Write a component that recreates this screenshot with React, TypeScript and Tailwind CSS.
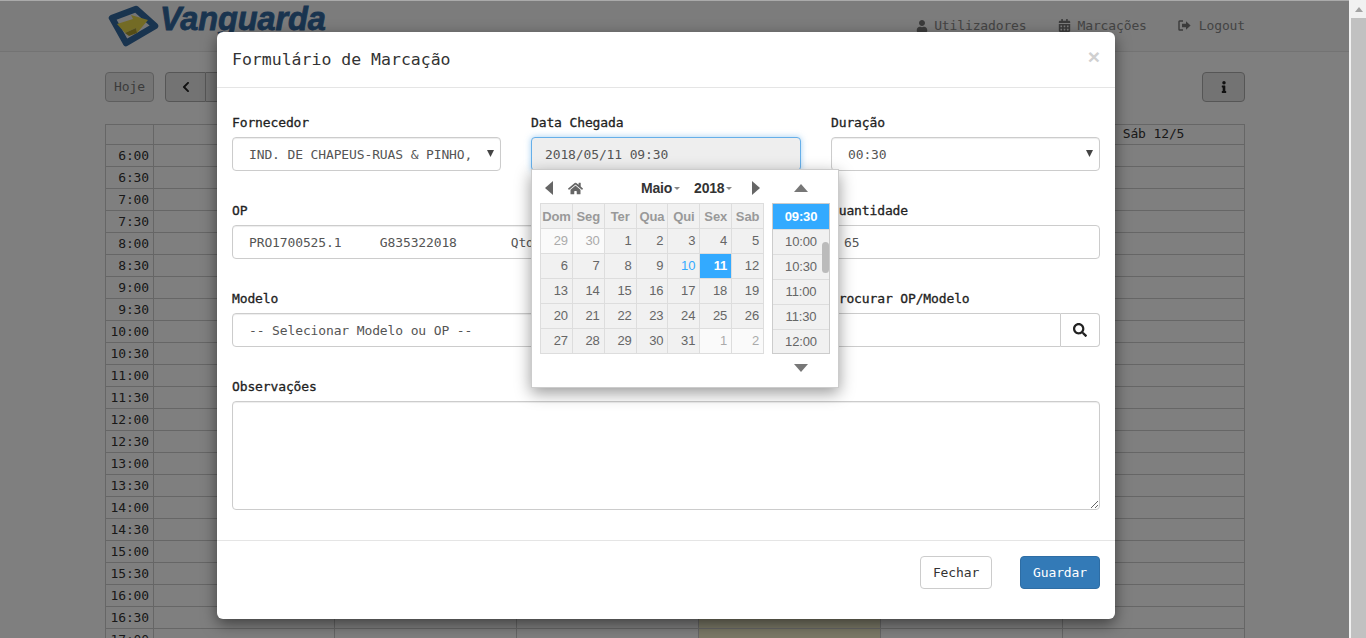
import React from "react";
import { FaUser, FaCalendarAlt, FaSearch, FaHome, FaInfo, FaChevronLeft } from "react-icons/fa";

const mono = "font-['DejaVu_Sans_Mono','Liberation_Mono',monospace] text-[13px] tracking-[-0.13px]";
const times = ["6:00","6:30","7:00","7:30","8:00","8:30","9:00","9:30","10:00","10:30","11:00","11:30","12:00","12:30","13:00","13:30","14:00","14:30","15:00","15:30","16:00","16:30","17:00"];
const heads = ["Seg 7/5","Ter 8/5","Qua 9/5","Qui 10/5","Sex 11/5","Sáb 12/5"];
const dayCols = [0,1,2,3,4,5];

function Caret() {
  return (
    <svg width="7" height="7" viewBox="0 0 7 7" className="shrink-0 -mt-[2px]">
      <path d="M0 0h7L3.5 7z" fill="#444" />
    </svg>
  );
}

function Logo() {
  return (
    <svg width="52" height="44" viewBox="0 0 52 44" className="shrink-0">
      <path d="M4 14 L28 5 L47 22 L18 39 Z" fill="#ececec" stroke="#33689f" strokeWidth="6.5" strokeLinejoin="round" />
      <path d="M9 20 L25 15 L23 11 L40 16 L29 29 L28 24 L17 29Z" fill="#e6d64a" />
      <path d="M17 29 L28 24 L29 29 L21 32Z" fill="#a89a2c" />
    </svg>
  );
}

function LogoutIcon() {
  return (
    <svg width="13" height="11" viewBox="0 0 13 11" className="shrink-0">
      <path d="M5 1H1.6Q1 1 1 1.6v7.8q0 .6.6.6H5" fill="none" stroke="#777" strokeWidth="1.4" />
      <path d="M4 3.8h4V1.2l4.6 4.3L8 9.8V7.2H4z" fill="#777" />
    </svg>
  );
}

function Label({ children }: { children: React.ReactNode }) {
  return <div className={`${mono} h-5 leading-[22px] mb-[5px] text-[#222] [-webkit-text-stroke:0.3px_#222]`}>{children}</div>;
}

function Select({ text, arrow = true }: { text: React.ReactNode; arrow?: boolean }) {
  return (
    <div className={`${mono} h-[34px] border border-[#ccc] rounded bg-white flex items-center pl-4 pr-[6px] text-[#555] shadow-[inset_0_1px_1px_rgba(0,0,0,0.075)]`}>
      <span className="flex-1 overflow-hidden whitespace-pre pt-[2px]">{text}</span>
      {arrow && <Caret />}
    </div>
  );
}

function Background() {
  return (
    <div className={`${mono} absolute inset-0 bg-white text-[#333] overflow-hidden`}>
      <div className="h-[52px] bg-[#f8f8f8] border-b border-[#e7e7e7] flex items-center pl-[108px] pr-[104px]">
        <Logo />
        <span className="font-['Liberation_Sans',sans-serif] font-bold italic text-[32.5px] text-[#33689f] [-webkit-text-stroke:0.8px_#33689f] -mt-[13px] leading-none">Vanguarda</span>
        <div className="ml-auto flex items-center text-[#888]">
          <FaUser className="w-3 h-3 text-[#777] mr-[6px]" />
          <span>Utilizadores</span>
          <FaCalendarAlt className="w-[13px] h-[13px] text-[#777] ml-[31px] mr-[7px]" />
          <span>Marcações</span>
          <span className="ml-[31px] mr-[8px]"><LogoutIcon /></span>
          <span>Logout</span>
        </div>
      </div>
      <div className="w-[1140px] ml-[105px]">
        <div className="mt-5 h-[30px] flex items-center">
          <div className="w-[49px] h-[30px] border border-[#adadad] rounded bg-[#e6e6e6] opacity-80 flex items-center justify-center text-[#555]">Hoje</div>
          <div className="ml-[11px] w-[41px] h-[30px] border border-[#adadad] rounded-l bg-[#e6e6e6] flex items-center justify-center">
            <FaChevronLeft className="w-3 h-3 text-[#222]" />
          </div>
          <div className="w-[40px] h-[30px] border border-l-0 border-[#adadad] bg-[#e6e6e6]" />
          <div className="ml-auto w-[43px] h-[30px] border border-[#adadad] rounded bg-[#e6e6e6] flex items-center justify-center">
            <FaInfo className="w-3 h-3 text-[#222]" />
          </div>
        </div>
        <div className="mt-[22px] border-t border-l border-[#ccc]">
          <div className="flex h-5 border-b border-[#ccc]">
            <div className="w-[48px] border-r border-[#ccc]" />
            {dayCols.map((i) => (
              <div key={i} className={`${i === 0 ? "w-[181px]" : "w-[182px]"} border-r border-[#ccc] text-center leading-[18px]`}>{heads[i]}</div>
            ))}
          </div>
          {times.map((t) => (
            <div key={t} className="flex h-[22px] border-b border-[#ccc]">
              <div className="w-[48px] border-r border-[#ccc] text-right pr-[4px] leading-[22px]">{t}</div>
              {dayCols.map((i) => (
                <div key={i} className={`${i === 0 ? "w-[181px]" : "w-[182px]"} border-r border-[#ccc] ${i === 3 ? "bg-[#f6f2cf]" : ""}`} />
              ))}
            </div>
          ))}
        </div>
      </div>
    </div>
  );
}

const weeks = [
  [29,30,1,2,3,4,5],
  [6,7,8,9,10,11,12],
  [13,14,15,16,17,18,19],
  [20,21,22,23,24,25,26],
  [27,28,29,30,31,1,2],
];

function Picker() {
  const cell = "w-8 h-[25px] border-r border-b border-[#ddd] text-right pr-[4px] leading-[23px]";
  return (
    <div className="absolute z-10 left-0 top-[57px] w-[308px] h-[219px] bg-white border border-[#ccc] shadow-[0_5px_15px_rgba(0,0,0,0.4)] pl-[8px] pt-[10px] font-['Liberation_Sans',sans-serif] text-[13px] text-[#666]">
      <div className="flex items-center h-4 relative">
        <svg width="8" height="14" viewBox="0 0 8 14" className="ml-[5px]"><path d="M8 0v14L0 7z" fill="#666" /></svg>
        <FaHome className="w-[15px] h-[15px] text-[#666] ml-[15px]" />
        <span className="ml-[58px] font-bold text-[14px] tracking-[-0.2px] text-[#333]">Maio</span>
        <svg width="6" height="3" viewBox="0 0 6 3" className="ml-[2px]"><path d="M0 0h6L3 3z" fill="#888" /></svg>
        <span className="ml-[14px] font-bold text-[14px] tracking-[-0.2px] text-[#333]">2018</span>
        <svg width="6" height="3" viewBox="0 0 6 3" className="ml-[2px]"><path d="M0 0h6L3 3z" fill="#888" /></svg>
        <svg width="8" height="14" viewBox="0 0 8 14" className="ml-[20px]"><path d="M0 0v14L8 7z" fill="#666" /></svg>
        <svg width="14" height="8" viewBox="0 0 14 8" className="ml-[34px]"><path d="M7 0l7 8H0z" fill="#777" /></svg>
      </div>
      <div className="flex mt-[7px]">
        <div className="w-[224px] border-l border-t border-[#ddd] bg-[#f1f1f1] h-[151px]">
          <div className="flex">
            {["Dom","Seg","Ter","Qua","Qui","Sex","Sab"].map((d) => (
              <div key={d} className="w-8 h-[25px] border-r border-b border-[#ddd] text-center font-bold text-[#999] leading-[25px] text-[13px]">{d}</div>
            ))}
          </div>
          {weeks.map((w, r) => (
            <div key={r} className="flex">
              {w.map((d, c) => {
                const other = (r === 0 && c < 2) || (r === 4 && c > 4);
                const sel = r === 1 && c === 5;
                const today = r === 1 && c === 4;
                return (
                  <div key={c} className={`${cell} ${other ? "bg-[#fafafa] text-[#aaa]" : ""} ${sel ? "bg-[#33aaff] text-white font-bold" : ""} ${today ? "text-[#33aaff]" : ""}`}>{d}</div>
                );
              })}
            </div>
          ))}
        </div>
        <div className="relative ml-[8px] w-[58px] h-[151px] border border-[#ccc] bg-[#f1f1f1] overflow-hidden text-center">
          <div className="h-[25px] bg-[#33aaff] text-white font-bold leading-[25px]">09:30</div>
          {["10:00","10:30","11:00","11:30","12:00"].map((t) => (
            <div key={t} className="h-[25px] border-t border-[#ddd] leading-[23px]">{t}</div>
          ))}
          <div className="absolute right-0 top-[38px] w-[7px] h-[31px] rounded-full bg-[#bbb]" />
        </div>
      </div>
      <svg width="14" height="8" viewBox="0 0 14 8" className="ml-[254px] mt-[10px]"><path d="M0 0h14L7 8z" fill="#777" /></svg>
    </div>
  );
}

function Modal() {
  return (
    <div className={`${mono} w-[898px] h-[587px] mt-[31px] ml-[217px] bg-white rounded-md shadow-[0_5px_15px_rgba(0,0,0,0.5)] flex flex-col shrink-0`}>
      <div className="h-[56px] border-b border-[#e5e5e5] flex items-center pl-[15px] pr-[15px] shrink-0">
        <span className="text-[16.5px] tracking-normal text-[#333] pt-px">Formulário de Marcação</span>
        <span className="ml-auto -mt-[6px] font-['Liberation_Sans',sans-serif] font-bold text-[21px] text-[#d0d0d0] leading-none">×</span>
      </div>
      <div className="px-[15px] pt-[24px] h-[453px] shrink-0 border-b border-[#e5e5e5]">
        <div className="grid grid-cols-[269px_270px_269px] gap-x-[30px] gap-y-[29px]">
          <div>
            <Label>Fornecedor</Label>
            <Select text="IND. DE CHAPEUS-RUAS & PINHO," />
          </div>
          <div className="relative">
            <Label>Data Chegada</Label>
            <div className="h-[34px] border border-[#66afe9] rounded bg-[#eee] flex items-center pl-[13px] pt-[2px] text-[#555] shadow-[0_0_6px_rgba(102,175,233,0.6)]">2018/05/11 09:30</div>
            <Picker />
          </div>
          <div>
            <Label>Duração</Label>
            <Select text="00:30" />
          </div>
          <div className="col-span-2">
            <Label>OP</Label>
            <Select arrow={false} text="PRO1700525.1     G835322018       Qtd: 65" />
          </div>
          <div>
            <Label>Quantidade</Label>
            <div className="h-[34px] border border-[#ccc] rounded flex items-center pl-[12px] pt-[2px] text-[#555]">65</div>
          </div>
          <div className="col-span-2">
            <Label>Modelo</Label>
            <Select arrow={false} text="-- Selecionar Modelo ou OP --" />
          </div>
          <div>
            <Label>Procurar OP/Modelo</Label>
            <div className="flex h-[34px]">
              <div className="flex-1 border border-[#ccc] rounded-l" />
              <div className="w-[39px] border border-l-0 border-[#ccc] rounded-r flex items-center justify-center">
                <FaSearch className="w-[14px] h-[14px] text-[#222]" />
              </div>
            </div>
          </div>
          <div className="col-span-3">
            <Label>Observações</Label>
            <textarea readOnly className="block w-full h-[109px] border border-[#ccc] rounded shadow-[inset_0_1px_1px_rgba(0,0,0,0.075)] outline-none" />
          </div>
        </div>
      </div>
      <div className="flex justify-end items-start pt-[15px] pr-[15px]">
        <div className="w-[72px] h-[33px] border border-[#ccc] rounded flex items-center justify-center text-[#333]">Fechar</div>
        <div className="ml-[28px] w-[80px] h-[33px] border border-[#2e6da4] rounded bg-[#337ab7] flex items-center justify-center text-white">Guardar</div>
      </div>
    </div>
  );
}

export default function App() {
  return (
    <div className="relative w-[1366px] h-[638px] overflow-hidden flex">
      <div className="relative w-[1349px] h-[638px] overflow-hidden">
        <Background />
        <div className="absolute inset-0 bg-black/50 flex flex-col">
          <div className="h-px bg-[#aaa] shrink-0" />
          <Modal />
        </div>
      </div>
      <div className="w-[17px] h-[638px] bg-[#f1f1f1] flex flex-col items-center shrink-0">
        <svg width="8" height="5" viewBox="0 0 8 5" className="mt-[7px] ml-[2px] shrink-0"><path d="M4 0l4 5H0z" fill="#a3a3a3" /></svg>
        <div className="w-[15px] ml-[2px] flex-1 mt-[6px] bg-[#c1c1c1]" />
      </div>
    </div>
  );
}
